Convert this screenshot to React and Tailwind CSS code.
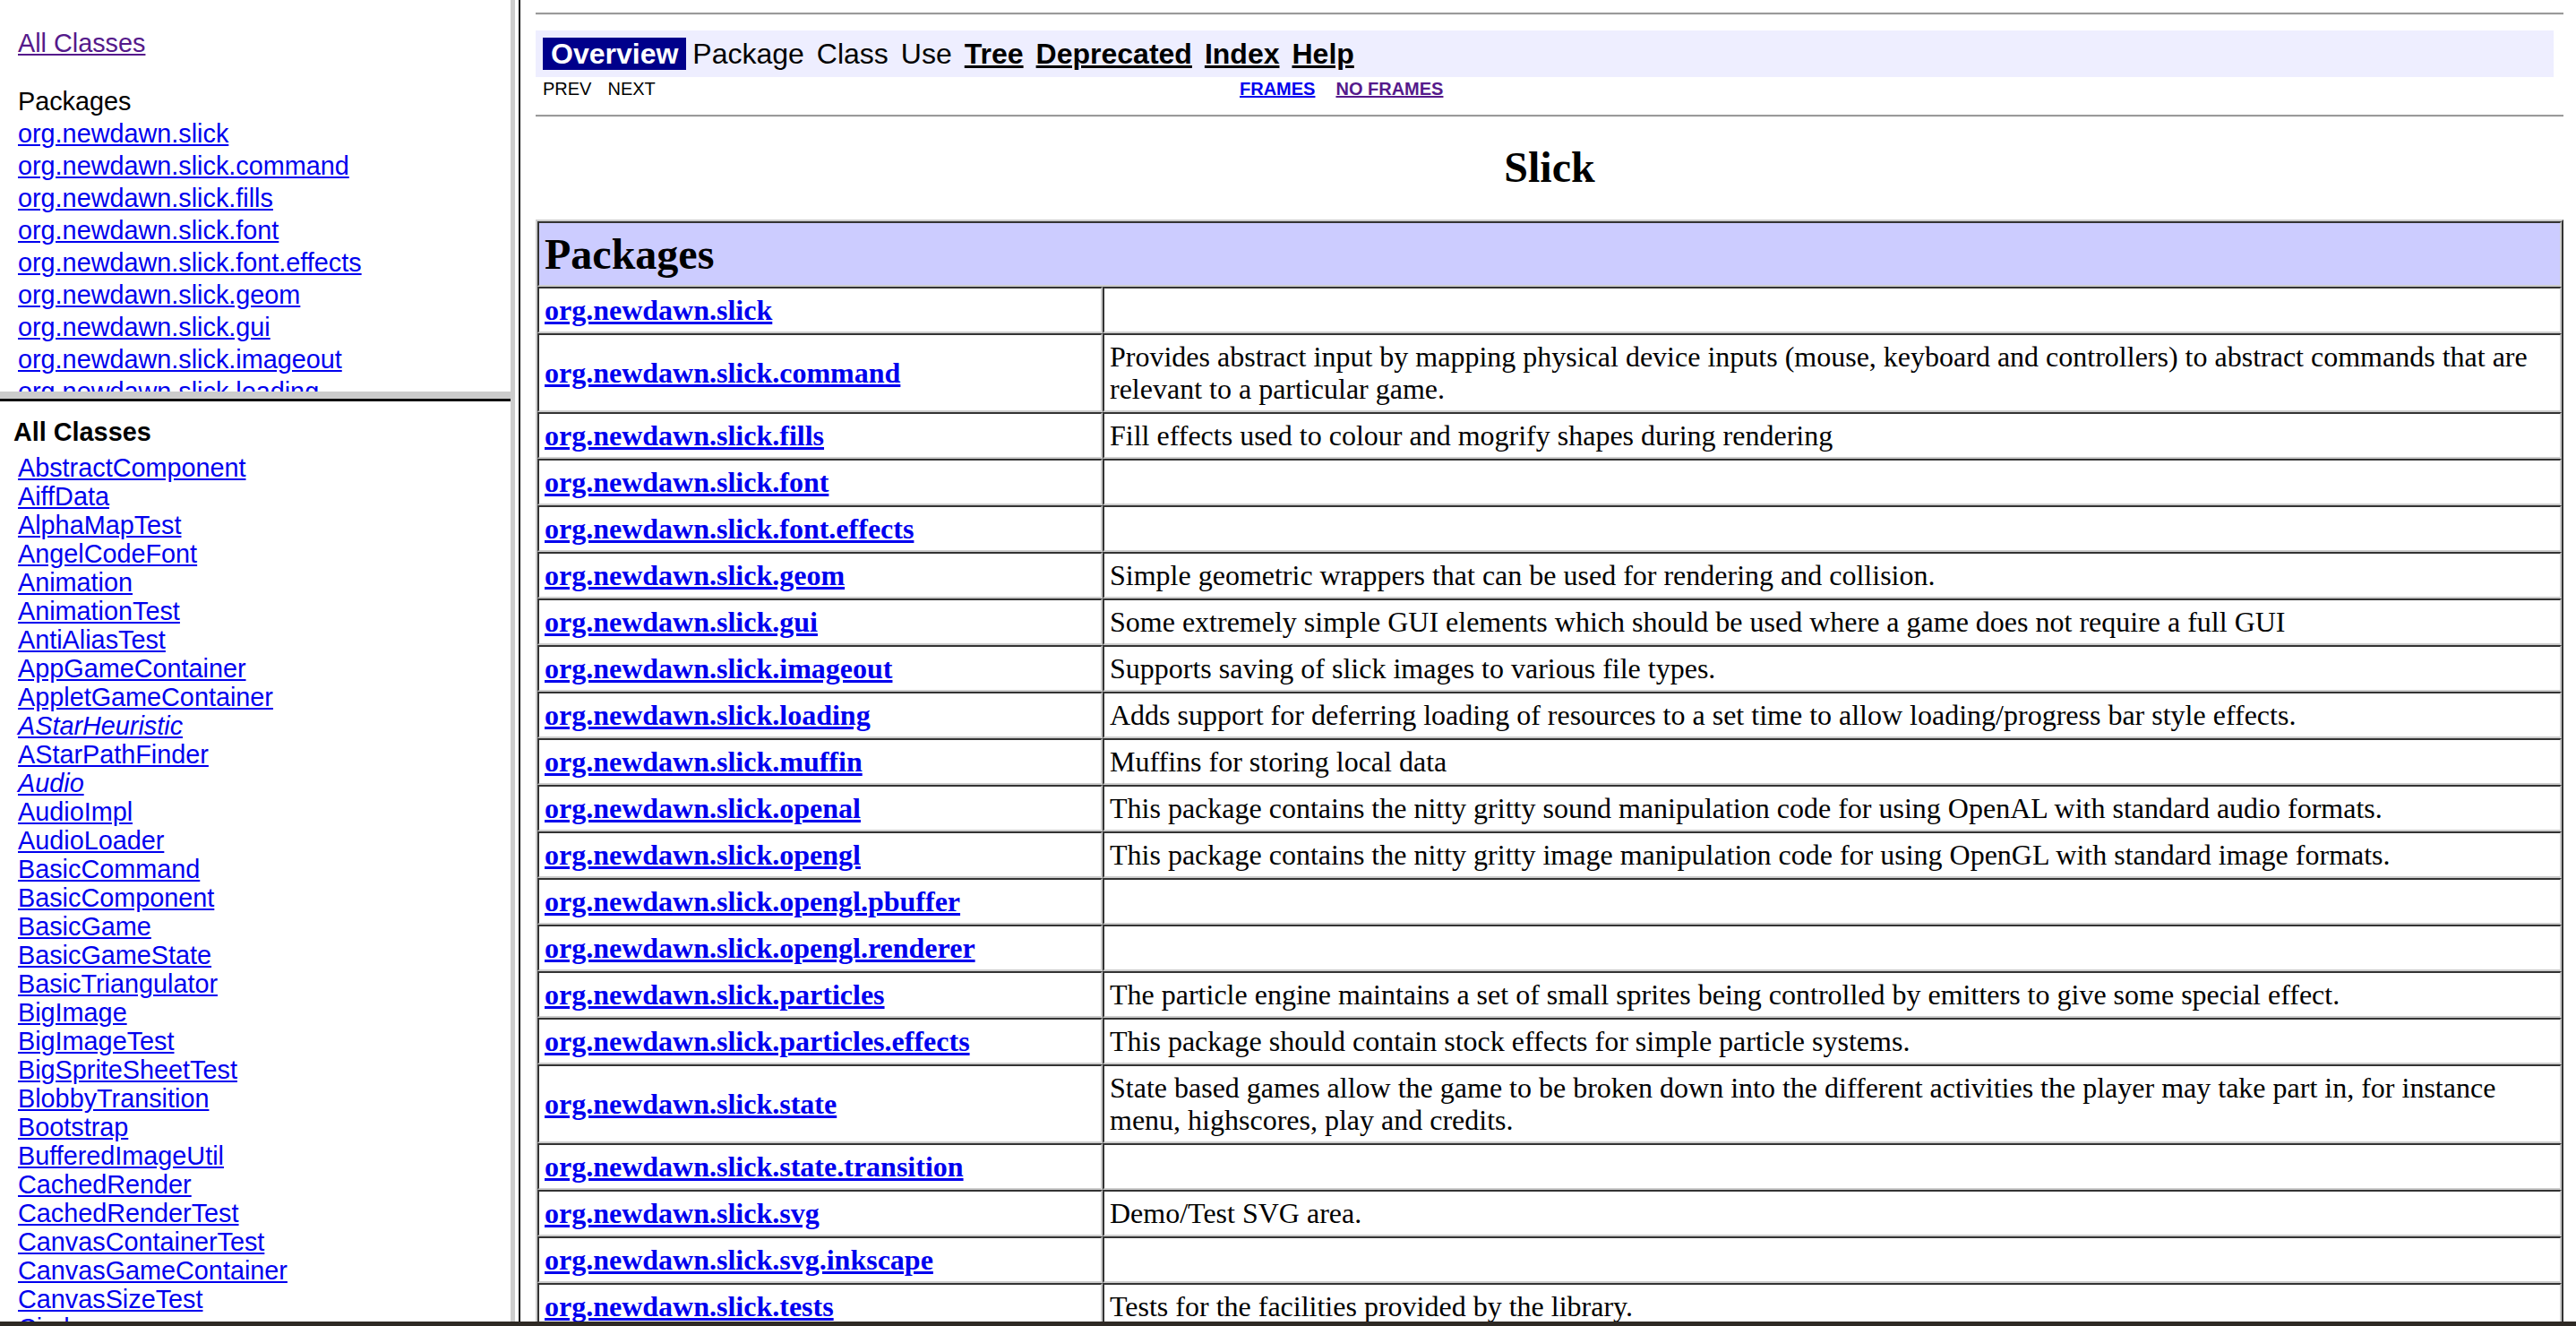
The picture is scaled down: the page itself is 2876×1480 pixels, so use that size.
import React from "react";

const packages = [
  ["org.newdawn.slick", ""],
  ["org.newdawn.slick.command", "Provides abstract input by mapping physical device inputs (mouse, keyboard and controllers) to abstract commands that are relevant to a particular game."],
  ["org.newdawn.slick.fills", "Fill effects used to colour and mogrify shapes during rendering"],
  ["org.newdawn.slick.font", ""],
  ["org.newdawn.slick.font.effects", ""],
  ["org.newdawn.slick.geom", "Simple geometric wrappers that can be used for rendering and collision."],
  ["org.newdawn.slick.gui", "Some extremely simple GUI elements which should be used where a game does not require a full GUI"],
  ["org.newdawn.slick.imageout", "Supports saving of slick images to various file types."],
  ["org.newdawn.slick.loading", "Adds support for deferring loading of resources to a set time to allow loading/progress bar style effects."],
  ["org.newdawn.slick.muffin", "Muffins for storing local data"],
  ["org.newdawn.slick.openal", "This package contains the nitty gritty sound manipulation code for using OpenAL with standard audio formats."],
  ["org.newdawn.slick.opengl", "This package contains the nitty gritty image manipulation code for using OpenGL with standard image formats."],
  ["org.newdawn.slick.opengl.pbuffer", ""],
  ["org.newdawn.slick.opengl.renderer", ""],
  ["org.newdawn.slick.particles", "The particle engine maintains a set of small sprites being controlled by emitters to give some special effect."],
  ["org.newdawn.slick.particles.effects", "This package should contain stock effects for simple particle systems."],
  ["org.newdawn.slick.state", "State based games allow the game to be broken down into the different activities the player may take part in, for instance menu, highscores, play and credits."],
  ["org.newdawn.slick.state.transition", ""],
  ["org.newdawn.slick.svg", "Demo/Test SVG area."],
  ["org.newdawn.slick.svg.inkscape", ""],
  ["org.newdawn.slick.tests", "Tests for the facilities provided by the library."],
];

const framePackages = packages.slice(0, 9).map(([n]) => n);

const classes = [
  ["AbstractComponent"], ["AiffData"], ["AlphaMapTest"], ["AngelCodeFont"], ["Animation"],
  ["AnimationTest"], ["AntiAliasTest"], ["AppGameContainer"], ["AppletGameContainer"],
  ["AStarHeuristic", true], ["AStarPathFinder"], ["Audio", true], ["AudioImpl"], ["AudioLoader"],
  ["BasicCommand"], ["BasicComponent"], ["BasicGame"], ["BasicGameState"], ["BasicTriangulator"],
  ["BigImage"], ["BigImageTest"], ["BigSpriteSheetTest"], ["BlobbyTransition"], ["Bootstrap"],
  ["BufferedImageUtil"], ["CachedRender"], ["CachedRenderTest"], ["CanvasContainerTest"],
  ["CanvasGameContainer"], ["CanvasSizeTest"], ["Circle"],
];

export default function App() {
  return (
    <div className="w-[2876px] h-[1480px] overflow-hidden flex flex-col bg-white">
      <div className="h-[1475px] flex flex-row overflow-hidden">
        {/* Left column */}
        <div className="w-[570px] flex flex-col font-['Liberation_Sans',Arial,sans-serif] text-[28.8px]">
          <div className="h-[437px] overflow-hidden pl-[20px] pt-[30px]">
            <div className="leading-[36px]">
              <a className="text-[#551a8b] underline">All Classes</a>
            </div>
            <div className="leading-[36px] mt-[29px] text-black">Packages</div>
            {framePackages.map((name) => (
              <div key={name} className="leading-[36px] whitespace-nowrap">
                <a className="text-[#0000ee] underline">{name}</a>
              </div>
            ))}
          </div>
          <div className="h-[8px] bg-[#cccccc]" />
          <div className="h-[3px] bg-[#111111]" />
          <div className="flex-1 overflow-hidden pl-[15px] pt-[16px]">
            <div className="leading-[36px] font-bold text-black">All Classes</div>
            <div className="mt-[6px] pl-[5px]">
              {classes.map(([name, it]) => (
                <div key={name} className="leading-[32px] whitespace-nowrap">
                  <a className={it ? "text-[#0000ee] underline italic" : "text-[#0000ee] underline"}>{name}</a>
                </div>
              ))}
            </div>
          </div>
        </div>

        {/* Frame border */}
        <div className="w-[5px] bg-[#cccccc]" />
        <div className="w-[4px] bg-white" />
        <div className="w-[2px] bg-[#111111]" />

        {/* Right frame */}
        <div className="flex-1 overflow-hidden pl-[17px] pr-[14px] pt-[14px]">
          <div className="h-[3px] border-t-2 border-[#9a9a9a] border-b border-b-[#eeeeee]" />
          <div className="mt-[17px] mr-[11px] bg-[#eeeeff] p-[8px] font-['Liberation_Sans',Arial,sans-serif] text-[32px] leading-[36px] text-black">
            <div className="flex flex-row items-center">
              <span className="bg-[#00008b] text-white font-bold px-[9px]">Overview</span>
              <span className="px-[7px]">Package</span>
              <span className="px-[7px]">Class</span>
              <span className="px-[7px]">Use</span>
              <a className="px-[7px] font-bold"><span className="underline">Tree</span></a>
              <a className="px-[7px] font-bold"><span className="underline">Deprecated</span></a>
              <a className="px-[7px] font-bold"><span className="underline">Index</span></a>
              <a className="px-[7px] font-bold"><span className="underline">Help</span></a>
            </div>
          </div>
          <div className="mt-[2px] h-[23px] flex flex-row font-['Liberation_Sans',Arial,sans-serif] text-[20px] leading-[23px]">
            <div className="w-[786px] pl-[8px] flex flex-row text-black">
              <span>PREV</span>
              <span className="ml-[18px]">NEXT</span>
            </div>
            <a className="font-bold text-[#0000ee] underline">FRAMES</a>
            <a className="ml-[23px] font-bold text-[#551a8b] underline">NO FRAMES</a>
          </div>
          <div className="mt-[17px] h-[3px] border-t-2 border-[#9a9a9a] border-b border-b-[#eeeeee]" />
          <h1 className="mt-[28px] text-center font-['Liberation_Serif','Times_New_Roman',serif] font-bold text-[48px] leading-[55px] text-black">
            Slick
          </h1>
          <table className="mt-[31px] w-full border-separate border-spacing-0 border-2 border-[#333333] border-t-[#cccccc] border-l-[#cccccc] font-['Liberation_Serif','Times_New_Roman',serif] text-black">
            <tbody>
              <tr>
                <td colSpan={2} className="bg-[#ccccff] p-[6px] border-2 border-[#cccccc] border-t-[#333333] border-l-[#333333] text-[48px] leading-[57px] font-bold text-left">
                  Packages
                </td>
              </tr>
              {packages.map(([name, desc]) => (
                <tr key={name}>
                  <td className="w-[631px] p-[6px] border-2 border-[#cccccc] border-t-[#333333] border-l-[#333333] text-[32px] leading-[36px] font-bold align-middle">
                    <a className="text-[#0000ee] underline">{name}</a>
                  </td>
                  <td className="p-[6px] border-2 border-[#cccccc] border-t-[#333333] border-l-[#333333] text-[32px] leading-[36px] align-middle">
                    {desc || "\u00a0"}
                  </td>
                </tr>
              ))}
            </tbody>
          </table>
        </div>
      </div>
      <div className="h-[5px] bg-[#2e2924]" />
    </div>
  );
}
